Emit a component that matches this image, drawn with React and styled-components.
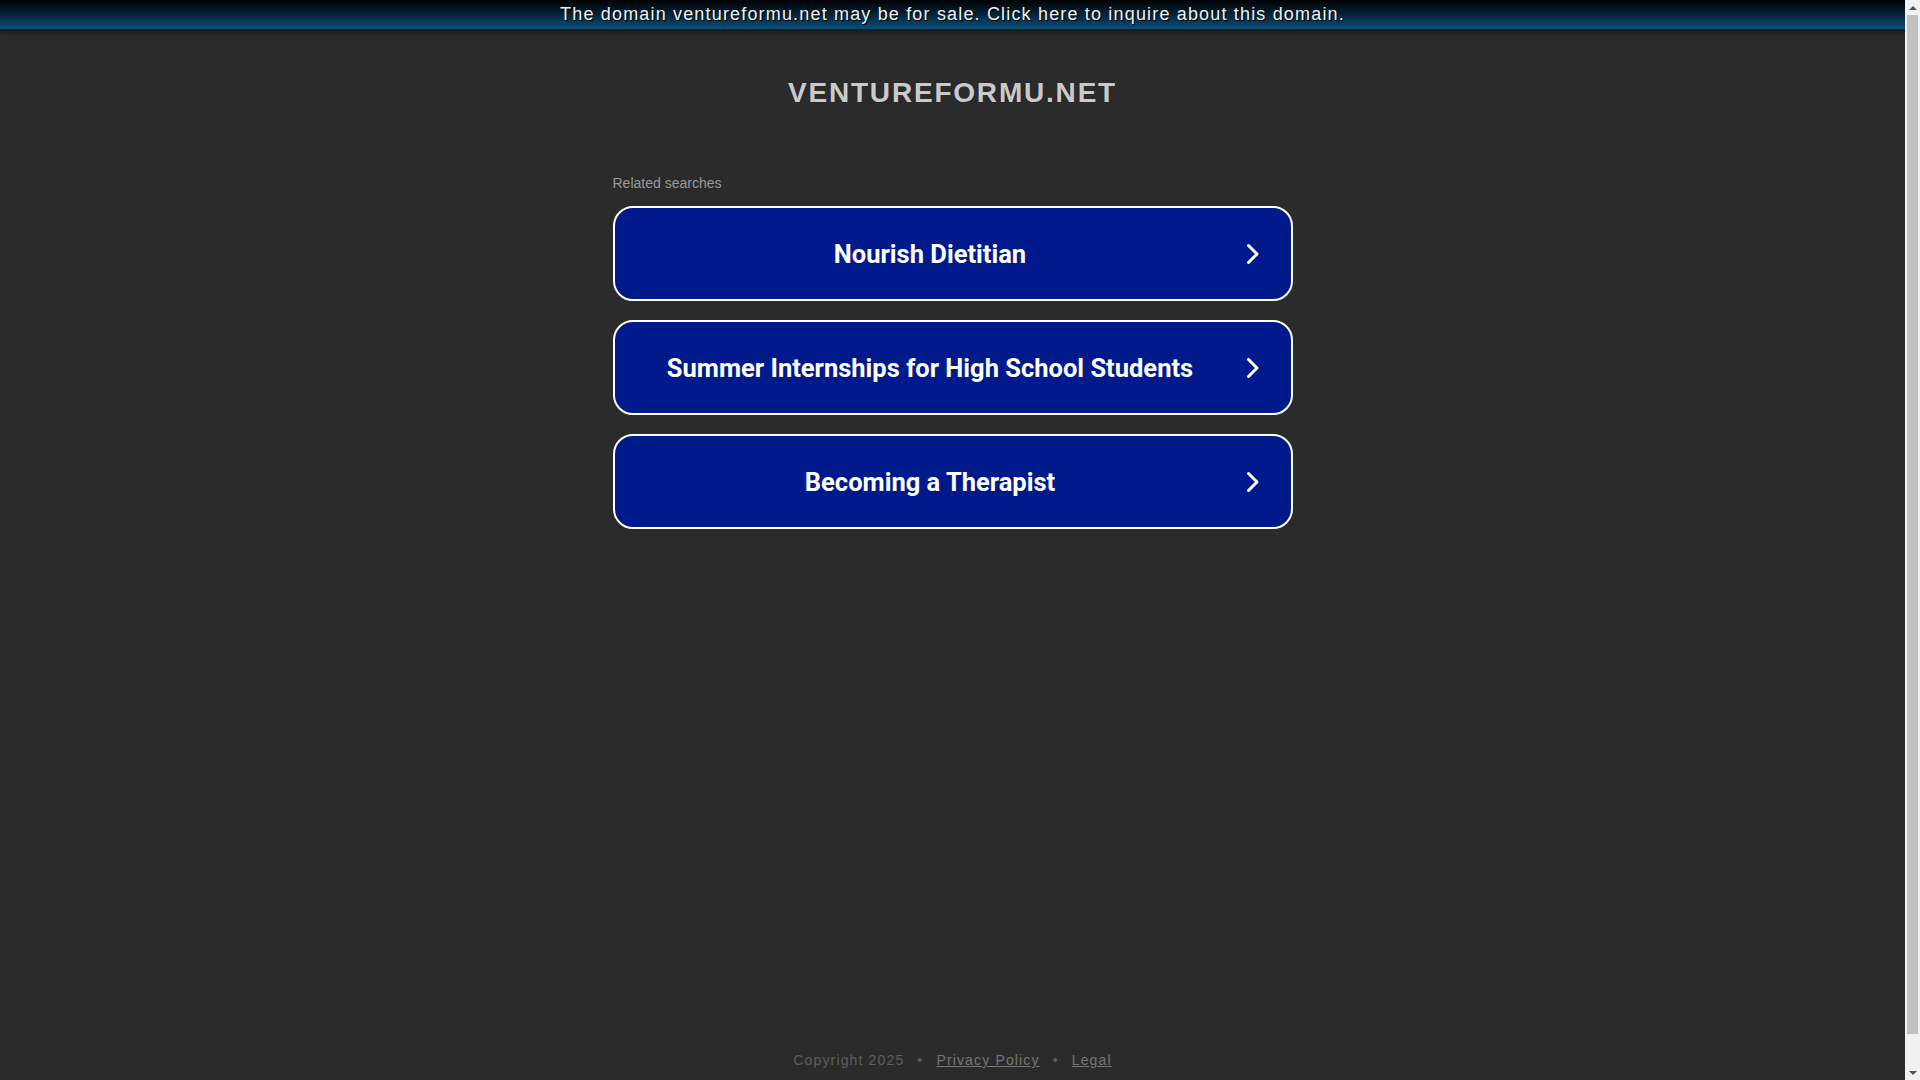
import styled, { createGlobalStyle } from "styled-components";

const GlobalStyle = createGlobalStyle`
  html, body {
    margin: 0;
    padding: 0;
    background: #2b2b2b;
  }
  body {
    font-family: "Liberation Sans", Arial, sans-serif;
  }
`;

const Page = styled.div`
  min-height: 1112px;
  margin-right: 15px;
  display: flex;
  flex-direction: column;
`;

const Banner = styled.a`
  display: block;
  height: 29px;
  line-height: 28px;
  overflow: hidden;
  text-align: center;
  color: #f2f2f2;
  font-size: 18px;
  letter-spacing: 1.17px;
  text-decoration: none;
  text-shadow: 1px 1px 1px #000;
  background: linear-gradient(to bottom, #000 0%, #05243a 50%, #0b4f78 100%);
  border-bottom: 2px solid #1c1c1c;
  box-shadow: 0 2px 4px rgba(0, 0, 0, 0.35);
`;

const Main = styled.main`
  width: 680px;
  margin: 0 auto;
  padding-top: 46px;
`;

const Title = styled.h1`
  margin: 0;
  text-align: center;
  color: #cacaca;
  font-size: 28px;
  line-height: 32px;
  font-weight: bold;
  letter-spacing: 1.8px;
`;

const Label = styled.div`
  margin-top: 66px;
  color: #9a9a9a;
  font-size: 14px;
  line-height: 16px;
`;

const List = styled.div`
  margin-top: 15px;
  display: flex;
  flex-direction: column;
  gap: 19px;
`;

const Item = styled.a`
  height: 91px;
  display: flex;
  align-items: center;
  background: #011a8b;
  border: 2px solid #fff;
  border-radius: 20px;
  color: #fff;
  text-decoration: none;
`;

const ItemText = styled.span`
  flex: 1;
  text-align: center;
  font-family: Roboto, "Liberation Sans", sans-serif;
  font-weight: 700;
  font-size: 25.5px;
`;

const Chevron = styled.svg`
  width: 14px;
  height: 22px;
  margin-right: 31px;
  flex: none;
`;

const Footer = styled.footer`
  margin-top: auto;
  padding-bottom: 42px;
  text-align: center;
  font-size: 14px;
  line-height: 20px;
  letter-spacing: 1.15px;
  color: #5e5e5e;
`;

const FooterLink = styled.a`
  color: #767676;
  text-decoration: underline;
`;

const Dot = styled.span`
  margin: 0 13px;
`;

const Scrollbar = styled.div`
  position: fixed;
  top: 0;
  right: 0;
  width: 15px;
  height: 100vh;
  background: #f1f1f1;
  display: flex;
  flex-direction: column;
  align-items: center;
`;

const ArrowBox = styled.div`
  height: 15px;
  flex: none;
  display: flex;
  align-items: center;
  justify-content: center;
  &::before {
    content: "";
    border-left: 4px solid transparent;
    border-right: 4px solid transparent;
    ${({ $down }) =>
      $down
        ? "border-top: 4px solid #505050;"
        : "border-bottom: 4px solid #505050;"}
  }
`;

const Track = styled.div`
  flex: 1;
  width: 100%;
  padding: 0 2px;
  box-sizing: border-box;
  display: flex;
  flex-direction: column;
`;

const Thumb = styled.div`
  height: 97%;
  background: #c1c1c1;
`;

const searches = [
  "Nourish Dietitian",
  "Summer Internships for High School Students",
  "Becoming a Therapist",
];

export default function App() {
  return (
    <Page>
      <GlobalStyle />
      <Banner href="#">
        The domain ventureformu.net may be for sale. Click here to inquire about this domain.
      </Banner>
      <Main>
        <Title>VENTUREFORMU.NET</Title>
        <Label>Related searches</Label>
        <List>
          {searches.map((s) => (
            <Item href="#" key={s}>
              <ItemText>{s}</ItemText>
              <Chevron viewBox="0 0 14 22">
                <polyline
                  points="2.5,2.5 11,11 2.5,19.5"
                  fill="none"
                  stroke="#fff"
                  strokeWidth="3"
                  strokeLinecap="round"
                  strokeLinejoin="round"
                />
              </Chevron>
            </Item>
          ))}
        </List>
      </Main>
      <Footer>
        Copyright 2025
        <Dot>•</Dot>
        <FooterLink href="#">Privacy Policy</FooterLink>
        <Dot>•</Dot>
        <FooterLink href="#">Legal</FooterLink>
      </Footer>
      <Scrollbar>
        <ArrowBox />
        <Track>
          <Thumb />
        </Track>
        <ArrowBox $down />
      </Scrollbar>
    </Page>
  );
}
